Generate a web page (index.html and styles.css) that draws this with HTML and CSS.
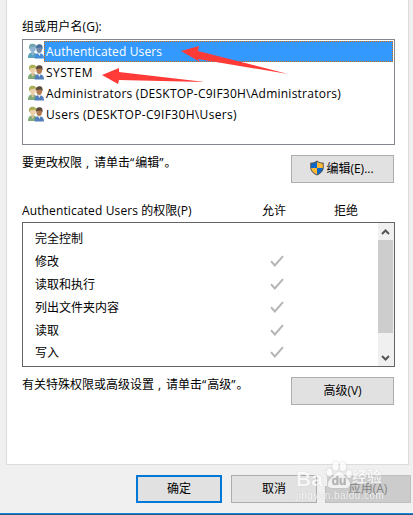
FILE: index.html
```html
<!DOCTYPE html>
<html lang="zh-CN">
<head>
<meta charset="utf-8">
<title>安全</title>
<link rel="stylesheet" href="styles.css">
</head>
<body>
<svg class="defs" width="0" height="0">
  <symbol id="users" viewBox="0 0 16 16">
    <path d="M0 15c0-4 1.500-5.500 4.500-5.500S9.500 11 9.500 15z" fill="var(--coat, #82a978)"/>
    <path d="M3.200 8.500h3l-.5 3-1 1.200-1-1.200z" fill="var(--skin, #dcc29c)"/>
    <ellipse cx="4.800" cy="5.300" rx="3" ry="3.800" fill="var(--skin, #ebcfa8)"/>
    <path d="M1.400 6.500C.2 2.500 2 .8 4.500.8S8.700 2 8 5L6 3.300C5 4.500 3.500 4.200 2.800 4z" fill="var(--hair, #a9af55)"/>
    <path d="M6.500 15.500c0-4 1.600-5.300 4.500-5.300s5 1.300 5 5.300z" fill="var(--suit, #527fba)"/>
    <path d="M10 10l1.400 3 1.400-3z" fill="#e5edf4"/>
    <ellipse cx="11.200" cy="6.200" rx="2.800" ry="3.700" fill="var(--face, #b17b50)"/>
    <path d="M8 5.500C7.800 2 9.500 1.300 11.500 1.300s3.600 1.200 3 5.200L13 4.500c-2 .5-3.500 0-5 1z" fill="var(--cap, #59483b)"/>
  </symbol>
  <symbol id="check" viewBox="0 0 14 12">
    <path d="M1 6.200l3.800 4.300L13 1.200" fill="none" stroke="#b5b5b5" stroke-width="2"/>
  </symbol>
</svg>
<div class="dialog">
  <main class="panel">
    <div class="label group-label">组或用户名(G):</div>
    <ul class="groups">
      <li class="selected"><svg class="user"><use href="#users"/></svg><span class="name n1">Authenticated Users</span></li>
      <li><svg class="user"><use href="#users"/></svg><span class="name n2">SYSTEM</span></li>
      <li><svg class="user"><use href="#users"/></svg><span class="name n3">Administrators (DESKTOP-C9IF30H\Administrators)</span></li>
      <li><svg class="user"><use href="#users"/></svg><span class="name n4">Users (DESKTOP-C9IF30H\Users)</span></li>
    </ul>
    <div class="action edit-row">
      <span class="hint">要更改权限<i class="comma">,</i>请单击<i class="quote">“</i>编辑<i class="quote">”</i>。</span>
      <button class="btn wide edit"><svg class="shield" viewBox="0 0 16 16"><path d="M8 .5C6 2 4 2.700 1.200 2.800v4.500C1.300 11 4 13.800 8 15.500c4-1.700 6.700-4.500 6.800-8.200V2.800C12 2.700 10 2 8 .5z" fill="#555"/><path d="M8 1.800V8H2.200V3.700C4.500 3.600 6.300 3 8 1.800z" fill="#0b68c9"/><path d="M8 1.800V8h5.800V3.700C11.500 3.600 9.700 3 8 1.800z" fill="#ffba35"/><path d="M2.200 8H8v6.400C4.700 13 2.500 11 2.200 8z" fill="#ffba35"/><path d="M13.800 8H8v6.400c3.300-1.400 5.500-3.400 5.800-6.400z" fill="#0b68c9"/></svg>编辑(E)...</button>
    </div>
    <div class="perm-head">
      <span class="perm-title"><span class="n1">Authenticated Users</span> 的权限(P)</span><span class="allow">允许</span><span>拒绝</span>
    </div>
    <div class="perms">
      <div class="perm-list">
        <div class="perm"><span>完全控制</span></div>
        <div class="perm"><span>修改</span><svg class="check"><use href="#check"/></svg></div>
        <div class="perm"><span>读取和执行</span><svg class="check"><use href="#check"/></svg></div>
        <div class="perm"><span>列出文件夹内容</span><svg class="check"><use href="#check"/></svg></div>
        <div class="perm"><span>读取</span><svg class="check"><use href="#check"/></svg></div>
        <div class="perm"><span>写入</span><svg class="check"><use href="#check"/></svg></div>
      </div>
      <div class="scrollbar">
        <svg class="arrow" viewBox="0 0 15 17"><path d="M4 11l3.500-3.500L11 11" /></svg>
        <div class="thumb"></div>
        <svg class="arrow down" viewBox="0 0 15 17"><path d="M4 7l3.500 3.500L11 7" /></svg>
      </div>
    </div>
    <div class="action adv-row">
      <span class="hint">有关特殊权限或高级设置<i class="comma">,</i>请单击<i class="quote">“</i>高级<i class="quote">”</i>。</span>
      <button class="btn wide">高级(V)</button>
    </div>
  </main>
  <footer class="buttons">
    <button class="btn default">确定</button>
    <button class="btn">取消</button>
    <button class="btn disabled">应用(A)</button>
  </footer>
  <div class="edge"></div>
</div>
<svg class="pointers" viewBox="0 0 413 130">
  <path d="M181 51l18-5-1 5 90 23-90-15 2 3z" fill="#ff3b38"/>
  <path d="M102 75l17-7v4l86 10-86-2-1 4z" fill="#ff3b38"/>
</svg>
<div class="watermark">
  <div class="mark-top"><span class="bai">Bai</span><svg class="paw" viewBox="0 0 26 28"><g fill="#fff"><ellipse cx="3.500" cy="11.500" rx="2.800" ry="4"/><ellipse cx="9.500" cy="5" rx="3.200" ry="4.500"/><ellipse cx="17" cy="5.500" rx="3.200" ry="4.500"/><ellipse cx="23" cy="13" rx="2.800" ry="4"/><path d="M13 11c4 0 5 4 8 6.500 5 4 3.500 9.500-1 9.500H6c-5 0-5.500-5-1.500-9C8 15 9 11 13 11z"/></g><text x="13" y="24" text-anchor="middle">du</text></svg><span class="jy">经验</span></div>
  <div class="url">jingyan.baidu.com</div>
</div>
</body>
</html>
```

FILE: styles.css
```css
* { box-sizing: border-box; }
body {
  margin: 0;
  width: 413px;
  height: 515px;
  overflow: hidden;
  background: #f0f0f0;
  color: #000;
  font: 12px/16px "Open Sans", "Noto Sans CJK SC", sans-serif;
}
.defs { position: absolute; }
.dialog { display: flex; flex-direction: column; height: 515px; }
.panel {
  width: 403px;
  height: 465px;
  margin-left: 6px;
  padding: 19px 13px 0 15px;
  border: 1px solid #dcdcdc;
  border-width: 0 1px 1px;
  background: #fff;
}
.label { height: 20px; letter-spacing: .1px; white-space: nowrap; }
.groups {
  width: 373px;
  height: 106px;
  margin: 0;
  padding: 1px;
  border: 1px solid #828790;
  list-style: none;
}
.groups li { display: flex; height: 21px; padding-left: 4px; align-items: center; }
.user { width: 16px; height: 16px; flex: none; margin-top: -1px; }
.name { flex: 1; height: 21px; padding-left: 2px; line-height: 21px; white-space: nowrap; }
.selected .name {
  padding-left: 1px;
  border: 1px dotted #cc6600;
  background: #3399ff;
  color: #fff;
  line-height: 19px;
}
.selected .user {
  --coat: #5aa1bd;
  --skin: #8fb5d3;
  --hair: #6ea5ac;
  --suit: #428cda;
  --face: #728ba8;
  --cap: #466f9d;
}
.n1 { letter-spacing: .13px; }
.n2 { letter-spacing: .5px; }
.n3 { letter-spacing: .24px; }
.n4 { letter-spacing: .34px; }
.action { display: flex; justify-content: space-between; }
.edit-row { height: 57px; padding-top: 10px; }
.hint { white-space: nowrap; }
.comma { display: inline-block; width: 12px; padding-left: 4px; font-style: normal; }
.quote { padding-right: 1px; font-style: normal; }
.btn {
  display: flex;
  align-items: center;
  justify-content: center;
  width: 86px;
  height: 28px;
  padding: 0;
  border: 1px solid #adadad;
  background: #e1e1e1;
  color: #000;
  font: inherit;
  white-space: nowrap;
}
.wide { width: 103px; margin-right: 1px; }
.edit { padding-right: 2px; }
.shield { width: 16px; height: 16px; margin: -2px 1px 0 0; }
.perm-head { display: flex; height: 20px; padding-top: 1px; white-space: nowrap; }
.perm-title { width: 240px; }
.allow { width: 72px; }
.perms {
  display: flex;
  width: 373px;
  height: 145px;
  border: 1px solid #646464;
}
.perm-list { flex: 1; padding: 4px 0 0 12px; }
.perm { display: grid; grid-template-columns: 235px 14px; height: 22.9px; align-items: center; }
.perm span { padding-top: 1px; }
.check { width: 14px; height: 12px; margin-top: -1px; }
.scrollbar { display: flex; flex-direction: column; width: 16px; padding-right: 1px; background: #f0f0f0; }
.arrow { width: 15px; height: 17px; fill: none; stroke: #555; stroke-width: 2; }
.thumb { height: 93px; background: #cdcdcd; }
.down { margin-top: 16px; }
.adv-row { padding-top: 10px; }
.buttons { display: flex; gap: 9px; padding: 10px 0 0 136px; height: 48px; }
.buttons .btn { flex: none; }
.buttons .default { border: 2px solid #0078d7; }
.buttons .disabled { margin-left: -1px; background: #ccc; border-color: #bfbfbf; color: #838383; }
.edge { height: 2px; border-top: 1px solid #1883d7; background: #245a83; }
.pointers { position: absolute; left: 0; top: 0; width: 413px; height: 130px; }
.watermark {
  position: absolute;
  left: 296px;
  top: 461px;
  width: 90px;
  color: #fff;
  opacity: .75;
  white-space: nowrap;
  text-shadow: 0 0 1px #aaa;
}
.mark-top { display: flex; align-items: flex-end; height: 28px; font: bold 20px/20px "Liberation Sans", "Noto Sans CJK SC", sans-serif; }
.bai { width: 31px; font-size: 21px; }
.paw { width: 26px; height: 28px; margin-left: -1px; filter: drop-shadow(0 0 1px #bbb); }
.paw text { font: bold 12px "Liberation Sans", sans-serif; fill: #aaa; }
.jy { font-size: 15px; line-height: 24px; }
.url { font: 10px/14px "Liberation Sans", sans-serif; letter-spacing: .45px; }
```
